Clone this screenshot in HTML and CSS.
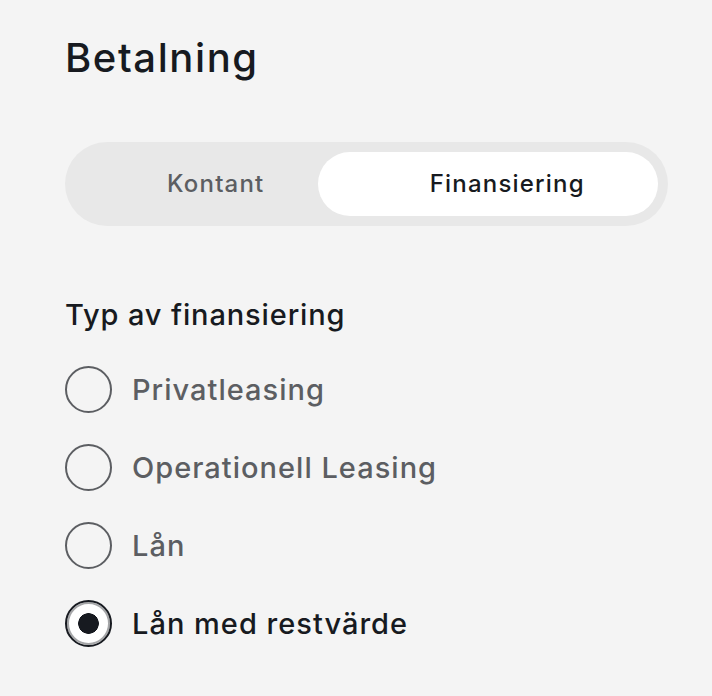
FILE: index.html
```html
<!DOCTYPE html>
<html lang="sv">
<head>
  <meta charset="UTF-8">
  <meta name="viewport" content="width=device-width, initial-scale=1.0">
  <title>Betalning</title>
  <link rel="stylesheet" href="styles.css">
</head>
<body>
  <div class="container">
    <h1>Betalning</h1>

    <div class="toggle">
      <span class="toggle-highlight"></span>
      <button class="toggle-btn">Kontant</button>
      <button class="toggle-btn active">Finansiering</button>
    </div>

    <h2>Typ av finansiering</h2>
    <div class="options">
      <label class="option">
        <input type="radio" name="finance" value="privat">
        <span>Privatleasing</span>
      </label>
      <label class="option">
        <input type="radio" name="finance" value="operationell">
        <span>Operationell Leasing</span>
      </label>
      <label class="option">
        <input type="radio" name="finance" value="lan">
        <span>Lån</span>
      </label>
      <label class="option">
        <input type="radio" name="finance" value="restvarde" checked>
        <span>Lån med restvärde</span>
      </label>
    </div>
  </div>
</body>
</html>
```

FILE: styles.css
```css
body {
  font-family: Inter, "Liberation Sans", sans-serif;
  margin: 0;
  padding: 0;
  background-color: #f4f4f4;
  color: #171a20;
}
.container {
  padding: 0 44px 0 65px;
}
h1 {
  margin: 34px 0 0;
  font-size: 40px;
  line-height: 48px;
  font-weight: 500;
  letter-spacing: 0.04em;
}
.toggle {
  position: relative;
  display: grid;
  grid-template-columns: 1fr 1fr;
  width: 603px;
  height: 84px;
  margin-top: 60px;
  padding: 10px;
  box-sizing: border-box;
  background: #e8e8e8;
  border-radius: 42px;
}
.toggle-highlight {
  position: absolute;
  top: 10px;
  bottom: 10px;
  left: 253px;
  right: 10px;
  background: #fff;
  border-radius: 32px;
}
.toggle-btn {
  position: relative;
  border: none;
  background: none;
  padding: 0 10px 0 0;
  font-family: inherit;
  font-size: 24px;
  font-weight: 500;
  line-height: 64px;
  letter-spacing: 0.05em;
  color: #5c5e62;
  cursor: pointer;
}
.toggle-btn.active {
  color: #171a20;
}
h2 {
  margin: 71px 0 0;
  font-size: 29px;
  line-height: 36px;
  font-weight: 500;
  letter-spacing: 0.03em;
}
.options {
  display: flex;
  flex-direction: column;
  gap: 31px;
  margin-top: 33px;
}
.option {
  display: flex;
  align-items: center;
  gap: 20px;
  font-size: 29px;
  font-weight: 500;
  letter-spacing: 0.035em;
  color: #5c5e62;
  cursor: pointer;
}
.option input {
  appearance: none;
  width: 47px;
  height: 47px;
  margin: 0;
  border: 2px solid #5c5e62;
  border-radius: 50%;
  background: transparent;
}
.option input:checked {
  border-color: #171a20;
  box-shadow: inset 0 0 0 2px #a5a6a8;
  background: radial-gradient(circle, #171a20 10px, #fff 10.6px);
}
.option input:checked + span {
  color: #171a20;
}
```
